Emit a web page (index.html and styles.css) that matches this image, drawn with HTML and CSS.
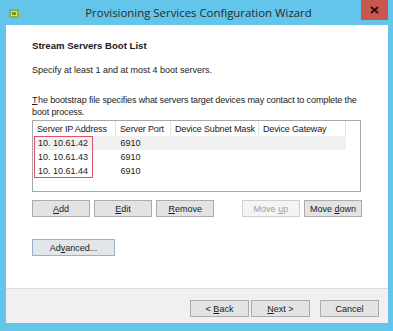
FILE: index.html
```html
<!DOCTYPE html>
<html lang="en">
<head>
    <meta charset="UTF-8">
    <title>Provisioning Services Configuration Wizard</title>
    <link rel="stylesheet" href="styles.css">
</head>
<body>
    <div class="window">
        <div class="titlebar">
            <svg class="app-icon" width="10" height="9" viewBox="0 0 10 9">
                <rect x="0" y="0" width="10" height="9" fill="#8fb33a"/>
                <rect x="2" y="2" width="6" height="5" fill="#d9e27a"/>
                <rect x="3" y="3" width="4" height="3" fill="#6f9a2a"/>
            </svg>
            <div class="title">Provisioning Services Configuration Wizard</div>
            <div class="close">
                <svg width="9" height="8" viewBox="0 0 9 8">
                    <path d="M1 1 L8 7 M8 1 L1 7" stroke="#2b1010" stroke-width="2"/>
                </svg>
            </div>
        </div>
        <div class="client">
            <div class="content">
                <h1 class="heading">Stream Servers Boot List</h1>
                <p class="hint">Specify at least 1 and at most 4 boot servers.</p>
                <p class="desc"><span class="acc">T</span>he bootstrap file specifies what servers target devices may contact to complete the boot process.</p>
                <div class="list">
                    <table>
                        <thead>
                            <tr>
                                <th class="c-ip">Server IP Address</th>
                                <th class="c-port">Server Port</th>
                                <th class="c-mask">Device Subnet Mask</th>
                                <th class="c-gw">Device Gateway</th>
                                <th class="c-rest"></th>
                            </tr>
                        </thead>
                        <tbody>
                            <tr class="selected"><td>10. 10.61.42</td><td>6910</td><td></td><td></td><td class="blank"></td></tr>
                            <tr><td>10. 10.61.43</td><td>6910</td><td></td><td></td><td class="blank"></td></tr>
                            <tr><td>10. 10.61.44</td><td>6910</td><td></td><td></td><td class="blank"></td></tr>
                        </tbody>
                    </table>
                    <div class="mark"></div>
                </div>
                <div class="actions">
                    <button class="btn"><u>A</u>dd</button>
                    <button class="btn"><u>E</u>dit</button>
                    <button class="btn"><u>R</u>emove</button>
                    <span class="spacer"></span>
                    <button class="btn disabled">Move <u>u</u>p</button>
                    <button class="btn">Move <u>d</u>own</button>
                </div>
                <button class="btn advanced">Ad<u>v</u>anced...</button>
            </div>
            <div class="footer">
                <button class="btn">&lt; <u>B</u>ack</button>
                <button class="btn"><u>N</u>ext &gt;</button>
                <button class="btn cancel">Cancel</button>
            </div>
        </div>
    </div>
</body>
</html>
```

FILE: styles.css
```css
html, body {
    margin: 0;
    padding: 0;
}
body {
    width: 393px;
    height: 331px;
    overflow: hidden;
    font-family: "Liberation Sans", Arial, sans-serif;
    font-size: 9px;
    color: #1a1a1a;
}
.window {
    box-sizing: border-box;
    width: 393px;
    height: 331px;
    background: #62c5e9;
    padding: 0 5px 8px 6px;
    display: flex;
    flex-direction: column;
}
.titlebar {
    height: 25px;
    display: flex;
    align-items: flex-start;
}
.app-icon {
    margin: 9px 0 0 3px;
}
.title {
    flex: 1;
    text-align: center;
    font-family: "Open Sans", sans-serif;
    font-size: 11.4px;
    color: #2a2a2a;
    line-height: 26px;
    margin-left: 16px;
    margin-right: -1px;
}
.close {
    width: 27px;
    height: 20px;
    background: #c9564f;
    display: flex;
    align-items: center;
    justify-content: center;
}
.client {
    flex: 1;
    background: #fff;
    display: flex;
    flex-direction: column;
}
.content {
    flex: 1;
    padding: 15px 26px 0 26px;
}
.heading {
    margin: 0;
    font-size: 9.6px;
    font-weight: bold;
    line-height: 12px;
}
.hint {
    margin: 12px 0 0 0;
    line-height: 12px;
}
.desc {
    margin: 18px 0 0 0;
    line-height: 12px;
    letter-spacing: -0.12px;
}
.acc {
    text-decoration: underline;
    letter-spacing: 0;
    margin-right: 0.5px;
}
.list {
    position: relative;
    margin-top: 2px;
    height: 70px;
    border: 1px solid #a8a8a8;
    margin-right: 1px;
    overflow: hidden;
}
table {
    border-collapse: collapse;
    width: 100%;
    table-layout: fixed;
}
th {
    font-weight: normal;
    text-align: left;
    height: 15px;
    padding: 0 0 0 4px;
    border-right: 1px solid #e3e3e3;
    white-space: nowrap;
    overflow: hidden;
    letter-spacing: -0.15px;
}
th.c-rest {
    border-right: none;
}
.c-ip { width: 78px; }
.c-port { width: 50px; }
.c-mask { width: 83px; }
.c-gw { width: 82px; }
td {
    height: 14px;
    padding: 0 0 0 5px;
    line-height: 14px;
}
tr.selected td {
    background: #f1f1f1;
}
tr.selected td.blank {
    background: #fff;
}
.mark {
    position: absolute;
    left: 1px;
    top: 15px;
    width: 59px;
    height: 42px;
    border: 1px solid #d9536a;
    box-sizing: border-box;
}
.actions {
    display: flex;
    margin-top: 8px;
    gap: 4px;
}
.spacer {
    width: 20px;
}
.btn {
    box-sizing: border-box;
    width: 59px;
    height: 17px;
    padding: 0;
    font-family: "Liberation Sans", Arial, sans-serif;
    font-size: 9px;
    color: #1a1a1a;
    background: #e3e3e3;
    border: 1px solid #acacac;
}
.btn.disabled {
    color: #a0a0a0;
    background: #f4f4f4;
    border-color: #cfcfcf;
}
.advanced {
    margin-top: 22px;
    width: 83px;
    background: #e1e6ea;
    border-color: #9ab0c4;
}
.footer {
    height: 35px;
    background: #f0f0f0;
    border-top: 1px solid #dcdcdc;
    display: flex;
    justify-content: flex-end;
    align-items: flex-start;
    padding: 11px 9px 0 0;
    box-sizing: border-box;
    gap: 2px;
}
.footer .cancel {
    margin-left: 8px;
}
```
